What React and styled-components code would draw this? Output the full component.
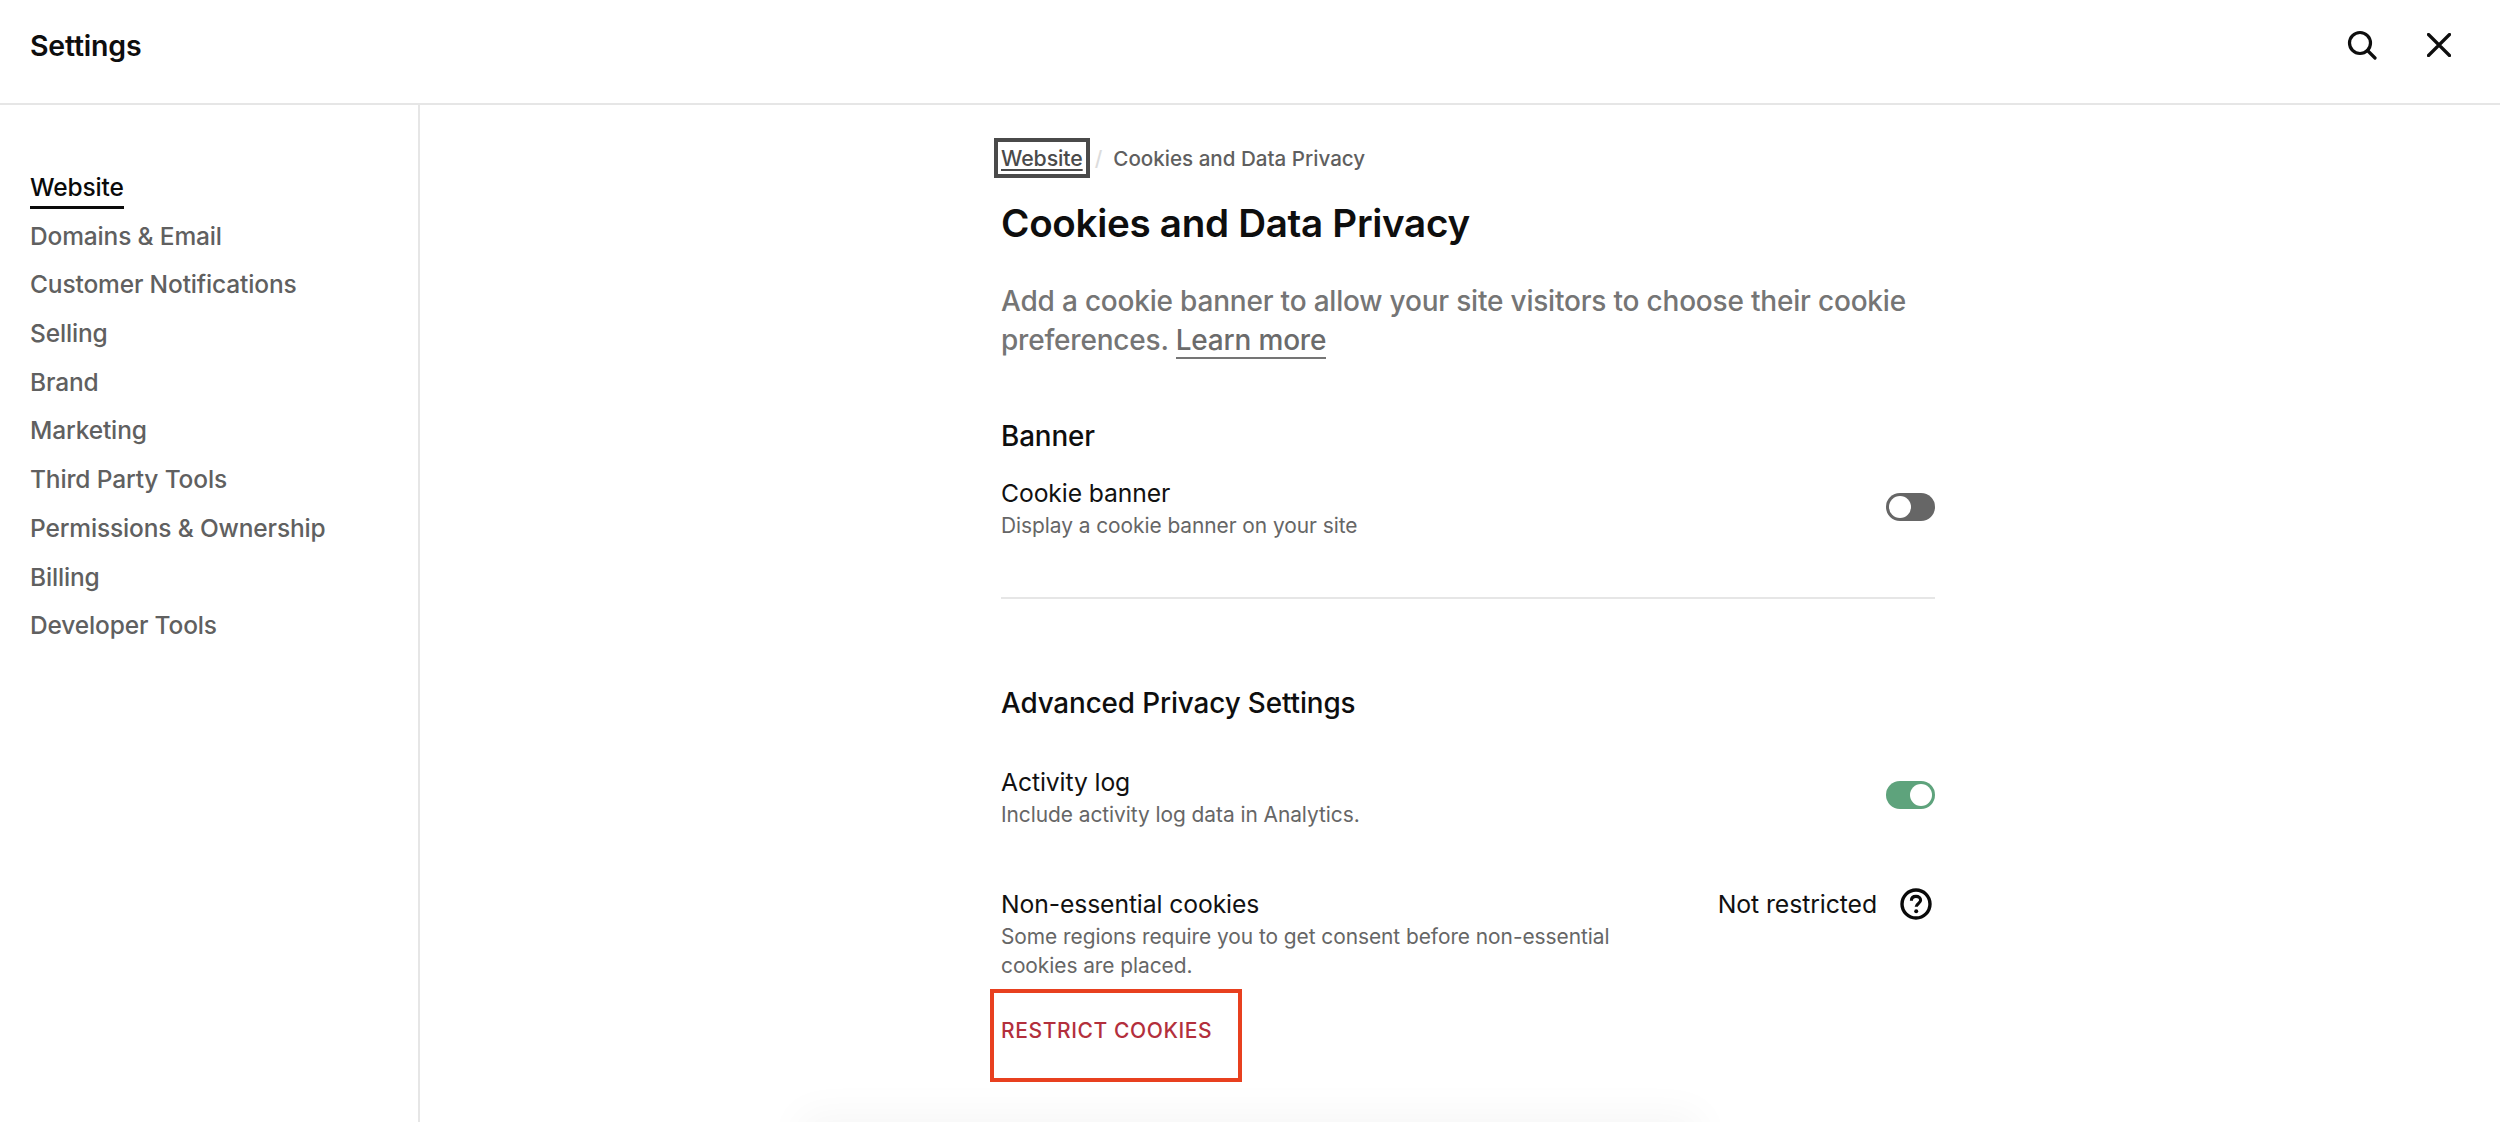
import React from "react";
import styled, { createGlobalStyle } from "styled-components";

const Global = createGlobalStyle`
  html, body { margin: 0; padding: 0; background: #fff; }
  body { font-family: Inter, "Liberation Sans", sans-serif; color: #0e0e0e; -webkit-font-smoothing: antialiased; }
`;
const Page = styled.div`
  width: 2500px; height: 1122px; display: flex; flex-direction: column; overflow: hidden; background: #fff;
`;
const Header = styled.header`
  height: 103px; flex: none; display: flex; align-items: center; justify-content: space-between;
  padding: 0 49px 0 30px; border-bottom: 2px solid #e6e6e6;
`;
const Title = styled.div`
  font-size: 28.5px; font-weight: 600; letter-spacing: -0.2px; margin-top: -12px;
`;
const Tools = styled.div`
  display: flex; align-items: center; gap: 50px; margin-top: -14px;
`;
const Body = styled.div`
  flex: 1; display: flex; min-height: 0;
`;
const Side = styled.nav`
  width: 388px; flex: none; border-right: 2px solid #e6e6e6; padding: 61px 0 0 30px; box-sizing: content-box;
  display: flex; flex-direction: column; align-items: flex-start; gap: 6.7px;
`;
const NavItem = styled.a`
  height: 42px; line-height: 42px; font-size: 24.5px; font-weight: 500;
  letter-spacing: -0.15px; color: ${p => p.$active ? "#0a0a0a" : "#606060"};
  box-shadow: ${p => p.$active ? "0 1px 0 #0a0a0a, inset 0 -2px 0 #0a0a0a" : "none"};
  white-space: nowrap;
`;
const Main = styled.main`
  flex: 1; position: relative; display: flex; justify-content: flex-start; padding-left: 581px;
`;
const Column = styled.div`
  width: 934px; display: flex; flex-direction: column; padding-top: 33px;
`;
const Crumbs = styled.div`
  display: flex; align-items: center; height: 40px; font-size: 20.6px; color: #5f5f5f; font-weight: 500;
`;
const CrumbLink = styled.a`
  text-decoration: underline; text-underline-offset: 3px; color: #4a4a4a; outline: 4px solid #4a4a4a; outline-offset: 3px;
  line-height: 26px; height: 26px; padding: 0; font-size: 21.3px; letter-spacing: -0.1px;
`;
const Slash = styled.span`
  color: #dcdcdc; margin: 0 11px 0 12px;
`;
const Heading = styled.h1`
  margin: 20px 0 0; font-size: 38.6px; line-height: 50px; font-weight: 600; letter-spacing: -0.3px; color: #0e0e0e;
`;
const Lead = styled.p`
  margin: 34px 0 0; font-size: 28px; line-height: 38.5px; color: #757575; font-weight: 500; letter-spacing: -0.2px;
`;
const LeadLink = styled.a`
  color: #6b6b6b; text-decoration: none; border-bottom: 2px solid #757575;
`;
const SectionTitle = styled.h2`
  margin: ${p => p.$top}px 0 0; font-size: 27.8px; line-height: 38px; font-weight: 500; letter-spacing: -0.1px; color: #0e0e0e;
`;
const Row = styled.div`
  display: flex; justify-content: space-between; align-items: flex-start; margin-top: ${p => p.$top}px;
`;
const RowText = styled.div`
  display: flex; flex-direction: column; width: 660px;
`;
const RowTitle = styled.div`
  font-size: 24.7px; line-height: 34px; font-weight: 400; letter-spacing: -0.1px; color: #111;
`;
const RowSub = styled.div`
  font-size: 20.9px; line-height: 29px; color: #666; letter-spacing: -0.05px; margin-top: 1px;
`;
const Toggle = styled.div`
  width: 49px; height: 28px; border-radius: 14px; box-sizing: border-box; padding: 3px;
  display: flex; justify-content: ${p => p.$on ? "flex-end" : "flex-start"};
  background: ${p => p.$on ? "#5ea37c" : "#666"}; margin-top: ${p => p.$mt}px;
`;
const Knob = styled.div`
  width: 22px; height: 22px; border-radius: 50%; background: #fff;
`;
const Divider = styled.hr`
  margin: 57px 0 0; border: 0; height: 2px; background: #e6e6e6;
`;
const Status = styled.div`
  display: flex; align-items: center; font-size: 24.8px; line-height: 34px; letter-spacing: -0.1px; color: #111; margin-right: 3px;
`;
const StatusIcon = styled.svg`
  margin-left: 23px; flex: none;
`;
const RestrictBox = styled.div`
  align-self: flex-start; margin: 9px 0 0 -11px; width: 252px; height: 93px; box-sizing: border-box;
  border: 4px solid #e8401f; padding: 0 0 0 7px; display: flex; align-items: center;
`;
const Restrict = styled.a`
  font-size: 21px; font-weight: 500; color: #b32f3c; letter-spacing: 0.6px; white-space: nowrap; margin-top: -11px;
`;
const BottomFade = styled.div`
  position: absolute; left: 380px; width: 900px; bottom: -60px; height: 60px;
  box-shadow: 0 -8px 40px rgba(0,0,0,0.04);
`;

const nav = ["Website","Domains & Email","Customer Notifications","Selling","Brand","Marketing","Third Party Tools","Permissions & Ownership","Billing","Developer Tools"];

export default function App() {
  return (
    <Page>
      <Global />
      <Header>
        <Title>Settings</Title>
        <Tools>
          <svg width="30" height="30" viewBox="0 0 30 30" fill="none" stroke="#0e0e0e" strokeWidth="3.2">
            <circle cx="13" cy="13" r="10.5" />
            <path d="M20.5 20.5 L28 28" strokeLinecap="round" />
          </svg>
          <svg width="24" height="24" viewBox="0 0 24 24" fill="none" stroke="#0e0e0e" strokeWidth="3.2" strokeLinecap="round">
            <path d="M1.5 1.5 L22.5 22.5 M22.5 1.5 L1.5 22.5" />
          </svg>
        </Tools>
      </Header>
      <Body>
        <Side>
          {nav.map((n, i) => <NavItem key={n} $active={i === 0}>{n}</NavItem>)}
        </Side>
        <Main>
          <Column>
            <Crumbs>
              <CrumbLink>Website</CrumbLink>
              <Slash>/</Slash>
              <span>Cookies and Data Privacy</span>
            </Crumbs>
            <Heading>Cookies and Data Privacy</Heading>
            <Lead>Add a cookie banner to allow your site visitors to choose their cookie preferences. <LeadLink>Learn more</LeadLink></Lead>
            <SectionTitle $top={58}>Banner</SectionTitle>
            <Row $top={21}>
              <RowText>
                <RowTitle>Cookie banner</RowTitle>
                <RowSub>Display a cookie banner on your site</RowSub>
              </RowText>
              <Toggle $mt={17}><Knob /></Toggle>
            </Row>
            <Divider />
            <SectionTitle $top={85}>Advanced Privacy Settings</SectionTitle>
            <Row $top={43}>
              <RowText>
                <RowTitle>Activity log</RowTitle>
                <RowSub>Include activity log data in Analytics.</RowSub>
              </RowText>
              <Toggle $on $mt={16}><Knob /></Toggle>
            </Row>
            <Row $top={58}>
              <RowText>
                <RowTitle>Non-essential cookies</RowTitle>
                <RowSub>Some regions require you to get consent before non-essential cookies are placed.</RowSub>
              </RowText>
              <Status>
                Not restricted
                <StatusIcon width="32" height="32" viewBox="0 0 32 32" fill="none">
                  <circle cx="16" cy="16" r="14" stroke="#0a0a0a" strokeWidth="3.4" />
                  <path d="M11.4 12.8 C11.4 9.9 13.4 8.4 16 8.4 C18.7 8.4 20.6 10 20.6 12.3 C20.6 15.4 16.2 15.4 16.2 18.8" stroke="#0a0a0a" strokeWidth="3.1" />
                  <circle cx="16.2" cy="23.2" r="2" fill="#0a0a0a" />
                </StatusIcon>
              </Status>
            </Row>
            <RestrictBox><Restrict>RESTRICT COOKIES</Restrict></RestrictBox>
          </Column>
          <BottomFade />
        </Main>
      </Body>
    </Page>
  );
}
